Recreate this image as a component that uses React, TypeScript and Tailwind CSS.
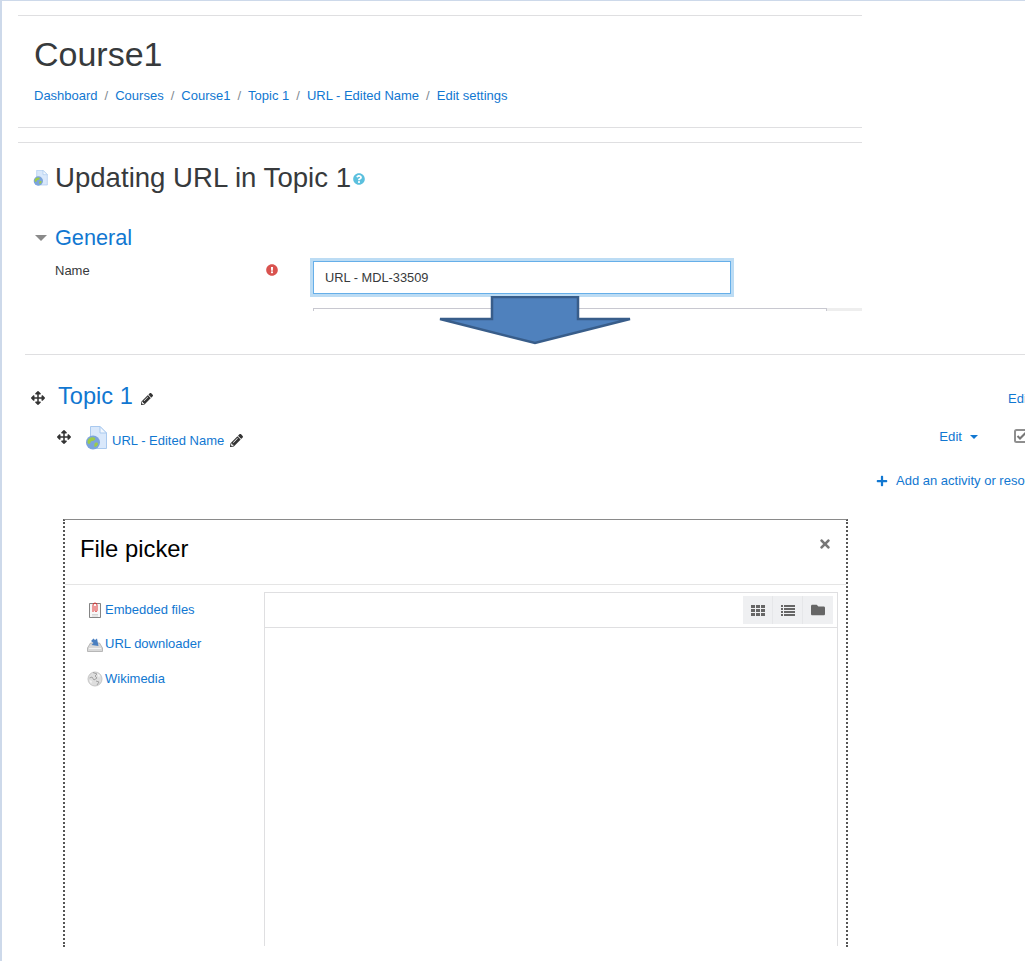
import { FaArrowsAlt, FaExclamationCircle, FaFolder, FaPencilAlt, FaPlus, FaQuestionCircle, FaTimes } from 'react-icons/fa';

const crumbs = ['Dashboard', 'Courses', 'Course1', 'Topic 1', 'URL - Edited Name', 'Edit settings'];

function UrlIcon({ className }: { className: string }) {
  return (
    <svg viewBox="0 0 24 24" className={className}>
      <path d="M5.500 .5H15L21.500 7V22.500H5.500Z" fill="#d9e8fb" stroke="#a9c9ef" />
      <path d="M15 .5V7H21.500Z" fill="#f2f7fd" stroke="#a9c9ef" />
      <circle cx="8" cy="16.500" r="7" fill="#7ba4dc" />
      <path d="M4 12.500c2-1.500 5-1.500 6-.5s-1 3-3 3-1 3-3 3-2-4 0-5.500ZM10 17c2-1 3 0 3 1s-2 3-3 3-1-3 0-4Z" fill="#9ccb4a" />
    </svg>
  );
}

function PaperclipIcon() {
  return (
    <svg viewBox="0 0 16 16" className="h-4 w-4">
      <path d="M2.500 1.500H13.500V15.500H2.500Z" fill="#f7f7f7" stroke="#666" strokeWidth=".8" />
      <path d="M6 10V3a2 2 0 0 1 4 0V8.500a1 1 0 0 1-2 0V4" fill="none" stroke="#d22" strokeWidth=".9" />
      <path d="M5 12.500H11M5 14H11" stroke="#c4c4c4" strokeWidth=".7" />
    </svg>
  );
}

function DownloaderIcon() {
  return (
    <svg viewBox="0 0 16 16" className="h-4 w-4">
      <path d="M3.500 7H12.500L15.500 12V15.500H.5V12Z" fill="#d8d8d8" stroke="#aaa" strokeWidth=".8" />
      <path d="M2 12.500H14" stroke="#f2f2f2" />
      <path d="M4 5 6.500 2.500 8 4 10 2.500 11.500 10 4.500 9 6.500 7Z" fill="#4a7fc0" />
    </svg>
  );
}

function WikiIcon() {
  return (
    <svg viewBox="0 0 16 16" className="h-4 w-4">
      <circle cx="8" cy="8" r="7" fill="#dedede" stroke="#c6c6c6" />
      <path d="M6 1.500 10 3 8 5 10 7 7 9 5 6 2.500 7M9 10l3 1-2 3" fill="none" stroke="#9c9c9c" strokeWidth=".9" />
      <path d="M2.500 9 5 10 4 13ZM10 2.500 13 4 12 7Z" fill="#f5f5f5" />
    </svg>
  );
}

function GridIcon() {
  return (
    <svg viewBox="0 0 14 11" className="h-[11px] w-[14px] fill-[#666]">
      <path d="M0 0H4V3H0ZM5 0H9V3H5ZM10 0H14V3H10ZM0 4H4V7H0ZM5 4H9V7H5ZM10 4H14V7H10ZM0 8H4V11H0ZM5 8H9V11H5ZM10 8H14V11H10Z" />
    </svg>
  );
}

function ListIcon() {
  return (
    <svg viewBox="0 0 14 11" className="h-[11px] w-[14px] fill-[#666]">
      <path d="M0 0H2V2H0ZM3 0H14V2H3ZM0 3H2V5H0ZM3 3H14V5H3ZM0 6H2V8H0ZM3 6H14V8H3ZM0 9H2V11H0ZM3 9H14V11H3Z" />
    </svg>
  );
}

const repos = [
  { label: 'Embedded files', icon: <PaperclipIcon /> },
  { label: 'URL downloader', icon: <DownloaderIcon /> },
  { label: 'Wikimedia', icon: <WikiIcon /> },
];

export default function App() {
  return (
    <div className="relative h-[961px] w-[1025px] overflow-hidden border-l-2 border-t border-[#cdd9ea] bg-white font-['Liberation_Sans',Arial,sans-serif] text-[13px] text-[#373a3c]">
      {/* Course header + form */}
      <div className="ml-4 h-[310px] w-[844px] overflow-hidden pt-[14px]">
        <div className="h-[113px] border-y border-[#dfdfe1] pl-4">
          <h1 className="mt-[19px] text-[34px] leading-[38px]">Course1</h1>
          <nav className="mt-[13px] flex items-center text-[13px] leading-[20px]">
            {crumbs.map((c, i) => (
              <span key={c} className="flex items-center">
                {i > 0 && <span className="mx-[7px] text-[#818a91]">/</span>}
                <a className="text-[#1177d1]">{c}</a>
              </span>
            ))}
          </nav>
        </div>
        <div className="mt-[14px] border-t border-[#dfdfe1] pl-4">
          <div className="mt-[18px] flex items-center">
            <UrlIcon className="ml-[-1px] mr-[6px] h-4 w-4" />
            <h2 className="text-[27.6px] leading-[34px]">Updating URL in Topic 1</h2>
            <FaQuestionCircle className="ml-[2px] mt-[2px] h-3 w-3 text-[#5bc0de]" />
          </div>
          <div className="mt-[30px] flex items-center">
            <span className="ml-px mr-[8px] h-0 w-0 border-x-[6px] border-t-[6px] border-x-transparent border-t-[#8a8a8a]" />
            <h3 className="text-[21.700px] leading-[26px] text-[#1177d1]">General</h3>
          </div>
          <div className="mt-[9px] flex">
            <span className="ml-[21px] mt-px w-[211px]">Name</span>
            <FaExclamationCircle className="mt-[4px] h-3 w-3 text-[#d9534f]" />
            <input
              readOnly
              value="URL - MDL-33509"
              className="ml-[35px] mt-px h-[33px] w-[418px] border border-[#66afe9] bg-white px-[11px] text-[12.800px] text-[#373a3c] shadow-[0_0_0_3px_#bcdcf4] outline-none"
            />
          </div>
          <div className="ml-[279px] mt-[14px] flex">
            <div className="h-4 w-[514px] border-x border-t border-[#c8c8d0]" />
            <div className="h-[3px] flex-1 bg-[#eeeeee]" />
          </div>
        </div>
      </div>

      {/* Course page with topic */}
      <div className="ml-[23px] mt-[43px] border-t border-[#dfdfe1]">
        <div className="mt-[27px] flex h-7 items-center">
          <FaArrowsAlt className="ml-[6px] mt-[3px] h-[14px] w-[14px] text-[#333]" />
          <a className="ml-[13px] mt-[2px] text-[23.600px] text-[#1177d1]">Topic 1</a>
          <FaPencilAlt className="ml-[8px] mt-[5px] h-3 w-3 text-[#333]" />
          <a className="ml-auto mr-[-23px] mt-[6px] w-10 text-[13px] text-[#1177d1]">Edit</a>
        </div>
        <div className="mt-[16px] flex h-6 items-start">
          <FaArrowsAlt className="ml-[32px] mt-[4px] h-[14px] w-[14px] text-[#333]" />
          <UrlIcon className="ml-[14px] mt-0 h-6 w-6" />
          <a className="ml-[3px] mt-[7px] text-[13px] leading-[15px] text-[#1177d1]">URL - Edited Name</a>
          <FaPencilAlt className="ml-[6px] mt-[8px] h-[13px] w-[13px] text-[#333]" />
          <a className="ml-auto mt-[3px] text-[13.200px] leading-[15px] text-[#1177d1]">Edit</a>
          <span className="ml-[8px] mt-[9px] h-0 w-0 border-x-[4px] border-t-[4px] border-x-transparent border-t-[#1177d1]" />
          <svg viewBox="0 0 14 14" className="ml-[36px] mr-[-3px] mt-[3px] h-[14px] w-[14px] shrink-0">
            <rect x="1" y="1" width="12" height="12" rx="1.500" fill="none" stroke="#8f8f8f" strokeWidth="2" />
            <path d="M3.500 7 6 9.500 12 3.500" fill="none" stroke="#777" strokeWidth="2" />
          </svg>
        </div>
        <div className="ml-[851px] mt-[21px] flex h-5 items-center whitespace-nowrap text-[13px] text-[#1177d1]">
          <FaPlus className="h-3 w-3 shrink-0" />
          <span className="ml-[8px]">Add an activity or resource</span>
        </div>
      </div>

      {/* File picker dialog */}
      <div className="ml-[61px] mt-[28px] h-[428px] w-[785px] border-x-2 border-dotted border-x-[#555] border-t border-t-[#8a8a8a] bg-white [border-top-style:solid]">
        <div className="relative h-[65px] border-b border-[#e5e5e5]">
          <h4 className="pl-[15px] pt-[15px] text-[23.800px] leading-[28px] text-black">File picker</h4>
          <FaTimes className="absolute right-[14px] top-[17px] h-[14px] w-[14px] text-[#777]" />
        </div>
        <div className="flex">
          <ul className="w-[199px] pl-[22px] pt-[16px]">
            {repos.map((r) => (
              <li key={r.label} className="flex h-[34.400px] items-start">
                <span className="mt-[1px]">{r.icon}</span>
                <a className="ml-[2px] text-[13px] leading-[17px] text-[#1177d1]">{r.label}</a>
              </li>
            ))}
          </ul>
          <div className="mr-[8px] mt-[7px] h-[354px] flex-1 border-x border-t border-[#dfdfe1]">
            <div className="flex h-[35px] justify-end border-b border-[#dfdfe1] pr-[4px] pt-[3px]">
              <div className="flex h-[28px] bg-[#eff0f2]">
                <span className="flex w-[30px] items-center justify-center border-r border-[#e6e7e9]"><GridIcon /></span>
                <span className="flex w-[30px] items-center justify-center border-r border-[#e6e7e9]"><ListIcon /></span>
                <span className="flex w-[30px] items-center justify-center"><FaFolder className="h-[14px] w-[14px] text-[#666]" /></span>
              </div>
            </div>
          </div>
        </div>
      </div>

      {/* Arrow between the two captures */}
      <svg viewBox="0 0 194 49" className="absolute left-[436px] top-[295px] h-[49px] w-[194px]">
        <path d="M54 1H140V23H192L97 47 2 23H54Z" fill="#4f81bd" stroke="#385d8a" strokeWidth="2.500" />
      </svg>
    </div>
  );
}
